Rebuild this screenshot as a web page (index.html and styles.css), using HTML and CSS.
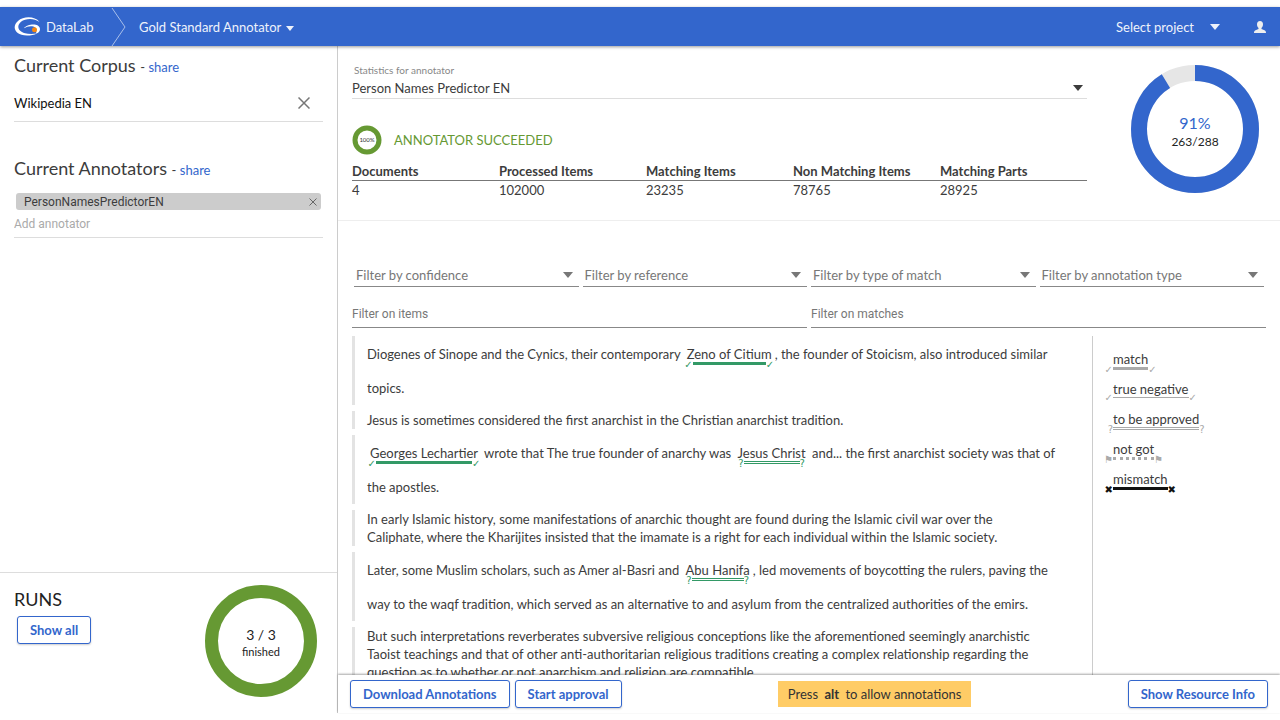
FILE: index.html
```
<!doctype html>
<html lang="en">
  <head>
    <meta charset="utf-8">
    <meta name="viewport" content="width=device-width, initial-scale=1.0">
    <title>DataLab - Gold Standard Annotator</title>
    <link rel="stylesheet" href="styles.css">
  </head>
  <body>

    <header class="topbar">
      <a class="brand" href="#">
        <svg class="logo" viewBox="0 0 27 19" width="27" height="19">
          <path d="M25.500 5C21 -1 9.500 -1 4 4C-2.500 9.500 .5 18.500 13 18.500C17 18.500 20 18 23 16.500C18 17.200 14 17 11 16.200C3.500 14.200 2.500 8.500 7 4.800C11.500 1.200 20 .8 25.500 5Z" fill="#fff"/>
          <path d="M10 11.200C13 7 25.500 5.500 26 12C26 14.500 24.500 16 22 16.500C23 13 22 9.500 18 9.300C15 9 12.500 9.800 10 11.200Z" fill="#fff"/>
          <circle cx="20.500" cy="12.800" r="2.500" fill="#f5870f"/>
        </svg>
        <span>DataLab</span>
      </a>
      <svg class="crumb" viewBox="0 0 16 38" width="16" height="38"><path d="M1 0L14 19L1 38" fill="none" stroke="#a9bfe9"/></svg>
      <button class="app-menu">Gold Standard Annotator <span class="caret small"></span></button>
      <button class="project">Select project <span class="caret"></span></button>
      <button class="user" aria-label="User">
        <svg viewBox="0 0 12 12" width="12" height="12"><path d="M6 0C8 0 9 1.300 9 3.200C9 5 8.300 6.200 7.500 7V8L10.500 9.200C11.600 9.700 12 10.500 12 12H0C0 10.500 .4 9.700 1.500 9.200L4.500 8V7C3.700 6.200 3 5 3 3.200C3 1.300 4 0 6 0Z" fill="#eee"/></svg>
      </button>
    </header>

    <div class="page">
      <aside class="sidebar">
        <section class="corpus">
          <h2>Current Corpus <small>- <a href="#">share</a></small></h2>
          <div class="corpus-item">
            <span>Wikipedia EN</span>
            <button class="close" aria-label="Remove corpus">
              <svg viewBox="0 0 12 12" width="12" height="12"><path d="M.5 .5L11.500 11.500M11.500 .5L.5 11.500" stroke="#777" stroke-width="1.500"/></svg>
            </button>
          </div>
        </section>
        <section class="annotators">
          <h2>Current Annotators <small>- <a href="#">share</a></small></h2>
          <div class="chip">
            <span>PersonNamesPredictorEN</span>
            <button class="close" aria-label="Remove annotator">
              <svg viewBox="0 0 8 8" width="8" height="8"><path d="M.5 .5L7.500 7.500M7.500 .5L.5 7.500" stroke="#666"/></svg>
            </button>
          </div>
          <input class="add" type="text" placeholder="Add annotator" aria-label="Add annotator">
        </section>
        <section class="runs">
          <div>
            <h2>RUNS</h2>
            <button class="btn">Show all</button>
          </div>
          <div class="ring ring-runs">
            <svg viewBox="0 0 112 112"><circle cx="56" cy="56" r="49.500" fill="none" stroke="#693" stroke-width="13"/></svg>
            <div class="ring-label"><span>3 / 3</span><small>finished</small></div>
          </div>
        </section>
      </aside>

      <main class="main">
        <section class="stats">
          <div class="stats-info">
            <label for="annotator">Statistics for annotator</label>
            <div class="select">
              <select id="annotator"><option>Person Names Predictor EN</option></select>
              <span class="caret"></span>
            </div>
            <div class="status">
              <div class="ring ring-status">
                <svg viewBox="0 0 30 30"><circle cx="15" cy="15" r="12" fill="none" stroke="#693" stroke-width="5"/></svg>
                <div class="ring-label">100%</div>
              </div>
              <span>ANNOTATOR SUCCEEDED</span>
            </div>
            <table>
              <thead>
                <tr><th>Documents</th><th>Processed Items</th><th>Matching Items</th><th>Non Matching Items</th><th>Matching Parts</th></tr>
              </thead>
              <tbody>
                <tr><td>4</td><td>102000</td><td>23235</td><td>78765</td><td>28925</td></tr>
              </tbody>
            </table>
          </div>
          <div class="ring ring-total">
            <svg viewBox="0 0 128 128">
              <circle cx="64" cy="64" r="56" fill="none" stroke="#e6e6e6" stroke-width="16"/>
              <circle cx="64" cy="64" r="56" fill="none" stroke="#36c" stroke-width="16" pathLength="100" stroke-dasharray="91.300 8.700" transform="rotate(-90 64 64)"/>
            </svg>
            <div class="ring-label"><b>91%</b><span>263/288</span></div>
          </div>
        </section>

        <section class="filters">
          <div class="filter-row selects">
            <div class="select"><select aria-label="Filter by confidence"><option>Filter by confidence</option></select><span class="caret"></span></div>
            <div class="select"><select aria-label="Filter by reference"><option>Filter by reference</option></select><span class="caret"></span></div>
            <div class="select"><select aria-label="Filter by type of match"><option>Filter by type of match</option></select><span class="caret"></span></div>
            <div class="select"><select aria-label="Filter by annotation type"><option>Filter by annotation type</option></select><span class="caret"></span></div>
          </div>
          <div class="filter-row">
            <input type="text" placeholder="Filter on items" aria-label="Filter on items">
            <input type="text" placeholder="Filter on matches" aria-label="Filter on matches">
          </div>
        </section>

        <div class="results">
          <div class="items">
            <p class="tall">Diogenes of Sinope and the Cynics, their contemporary <mark class="match">Zeno of Citium<i></i></mark>, the founder of Stoicism, also introduced similar<br>topics.</p>
            <p>Jesus is sometimes considered the first anarchist in the Christian anarchist tradition.</p>
            <p class="tall"><mark class="match">Georges Lechartier<i></i></mark> wrote that The true founder of anarchy was <mark class="approve">Jesus Christ<i></i></mark> and... the first anarchist society was that of<br>the apostles.</p>
            <p>In early Islamic history, some manifestations of anarchic thought are found during the Islamic civil war over the<br>Caliphate, where the Kharijites insisted that the imamate is a right for each individual within the Islamic society.</p>
            <p class="tall">Later, some Muslim scholars, such as Amer al-Basri and <mark class="approve">Abu Hanifa<i></i></mark>, led movements of boycotting the rulers, paving the<br>way to the waqf tradition, which served as an alternative to and asylum from the centralized authorities of the emirs.</p>
            <p>But such interpretations reverberates subversive religious conceptions like the aforementioned seemingly anarchistic<br>Taoist teachings and that of other anti-authoritarian religious traditions creating a complex relationship regarding the<br>question as to whether or not anarchism and religion are compatible.</p>
          </div>
          <ul class="legend">
            <li><mark class="match">match<i></i></mark></li>
            <li><mark class="negative">true negative<i></i></mark></li>
            <li><mark class="approve">to be approved<i></i></mark></li>
            <li><mark class="notgot">not got<i></i></mark></li>
            <li><mark class="mismatch">mismatch<i></i></mark></li>
          </ul>
        </div>

        <footer class="actions">
          <button class="btn">Download Annotations</button>
          <button class="btn">Start approval</button>
          <div class="hint">Press <b>alt</b> to allow annotations</div>
          <button class="btn">Show Resource Info</button>
        </footer>
      </main>
    </div>

  </body>
</html>
```

FILE: styles.css
```
*{
  box-sizing:border-box;
}
body{
  margin:0;
  padding:7px 0;
  height:100vh;
  display:flex;
  flex-direction:column;
  overflow:hidden;
  background:#fff;
  color:#3c3c3c;
  font:13px/18px Lato,"Noto Sans",sans-serif;
}
button,input,select{
  font:inherit;
  color:inherit;
  background:none;
  border:0;
  border-radius:0;
  padding:0;
  margin:0;
}
a{
  color:#36c;
  text-decoration:none;
}
h2{
  margin:0;
  font-size:18px;
  line-height:24px;
  font-weight:normal;
}
h2 small{
  font-size:13px;
}
.caret{
  display:inline-block;
  border:5px solid transparent;
  border-top:6px solid;
  border-bottom:0;
  pointer-events:none;
}
.caret.small{
  border-width:5px 4px 0;
  margin-left:2px;
  vertical-align:middle;
}

/* top bar */
.topbar{
  position:relative;
  z-index:1;
  flex:none;
  height:39px;
  display:flex;
  align-items:center;
  padding:0 14px;
  background:#36c;
  color:#eef2fb;
  box-shadow:0 1px 3px rgba(0,0,0,.4);
}
.brand{
  display:flex;
  align-items:center;
  gap:5px;
  width:97px;
  color:inherit;
}
.app-menu{
  margin-left:12px;
}
.project{
  display:flex;
  align-items:center;
  gap:16px;
  margin-left:auto;
}
.user{
  display:flex;
  margin-left:34px;
}

.page{
  flex:1;
  min-height:0;
  display:flex;
}

/* sidebar */
.sidebar{
  flex:0 0 338px;
  display:flex;
  flex-direction:column;
  border-right:1px solid #ccc;
}
.corpus{
  padding:7px 14px 0;
}
.annotators{
  padding:35px 14px 0;
}
.annotators h2{
  line-height:22px;
}
.corpus-item{
  display:flex;
  align-items:center;
  justify-content:space-between;
  height:43px;
  padding:5px 13px 0 0;
  border-bottom:1px solid #ddd;
  color:#111;
}
.close{
  display:flex;
}
.chip{
  display:flex;
  align-items:center;
  justify-content:space-between;
  height:17px;
  margin:12px 2px 4px;
  padding:0 4px 0 8px;
  border-radius:3px;
  background:#ccc;
  font-family:Roboto,sans-serif;
  font-size:12px;
}
.add{
  width:100%;
  height:23px;
  padding-bottom:4px;
  border-bottom:1px solid #ddd;
  font-family:Roboto,sans-serif;
  font-size:12px;
}
.add::placeholder{
  color:#aaa;
}
.runs{
  display:flex;
  justify-content:space-between;
  margin-top:auto;
  height:141px;
  padding:12px 20px 0 14px;
  border-top:1px solid #ddd;
  color:#222;
}
.runs h2{
  margin:2px 0 5px;
}
.runs .btn{
  margin-left:3px;
}

.btn{
  height:28px;
  padding:0 12px;
  border:1px solid #36c;
  border-radius:3px;
  color:#36c;
  background:#fff;
  font-weight:bold;
  box-shadow:0 1px 2px rgba(0,0,0,.2);
}

/* progress rings */
.ring{
  flex:none;
  display:grid;
}
.ring > *{
  grid-area:1/1;
}
.ring-label{
  display:flex;
  flex-direction:column;
  align-items:center;
  justify-content:center;
}
.ring-runs{
  width:112px;
  height:112px;
}
.ring-runs .ring-label{
  padding-top:3px;
  font-size:14px;
}
.ring-runs small{
  font-size:11px;
  line-height:16px;
}
.ring-status{
  width:30px;
  height:30px;
}
.ring-status .ring-label{
  font-size:6px;
  color:#333;
}
.ring-total{
  width:128px;
  height:128px;
}
.ring-total .ring-label{
  padding-top:6px;
  font-size:12px;
  color:#222;
}
.ring-total b{
  color:#36c;
  font-size:16px;
  font-weight:normal;
  line-height:20px;
}

/* statistics */
.main{
  flex:1;
  min-width:0;
  display:flex;
  flex-direction:column;
}
.stats{
  flex:none;
  display:flex;
  gap:44px;
  height:175px;
  padding:16px 21px 0 14px;
  border-bottom:1px solid #eee;
}
.stats .ring-total{
  margin-top:3px;
}
.stats-info{
  flex:1;
}
.stats label{
  display:block;
  padding-left:2px;
  font-size:10px;
  line-height:16px;
  color:#888;
}
.select{
  display:flex;
  align-items:center;
}
.select select{
  flex:1;
  appearance:none;
  min-width:0;
}
.stats .select{
  height:21px;
  padding-right:4px;
  border-bottom:1px solid #ddd;
}
.status{
  display:flex;
  align-items:center;
  gap:12px;
  height:30px;
  margin:26px 0 8px;
  color:#693;
}
table{
  width:100%;
  table-layout:fixed;
  border-collapse:collapse;
}
th{
  padding:0;
  border-bottom:1px solid #777;
  text-align:left;
  font-weight:bold;
  line-height:17px;
}
td{
  padding:0;
}

/* filters */
.filters{
  flex:none;
  padding:43px 14px 0;
}
.filter-row{
  display:flex;
  gap:4px;
}
.filter-row input{
  flex:1;
  height:27px;
  margin-top:14px;
  border-bottom:1px solid #888;
  font-family:Roboto,sans-serif;
  font-size:12px;
}
.filter-row input::placeholder{
  color:#777;
}
.selects{
  padding:0 2px;
}
.selects .select{
  flex:1;
  height:23px;
  padding:0 6px 0 2px;
  border-bottom:1px solid #888;
  color:#777;
}

/* annotated text */
.results{
  flex:1;
  min-height:0;
  display:flex;
  margin-top:8px;
  padding:0 14px;
  overflow:hidden;
}
.items{
  flex:1;
  min-width:0;
  white-space:nowrap;
}
.items p{
  margin:0 0 6px;
  padding-left:12px;
  border-left:3px solid #e3e3e3;
}
.items .tall{
  line-height:34px;
  padding-top:1px;
}
mark{
  position:relative;
  margin:0 3px;
  background:none;
  color:inherit;
  line-height:18px;
}
mark i{
  position:absolute;
  left:6px;
  right:6px;
  top:16px;
  height:4px;
  color:#396;
  font:10px/8px "DejaVu Sans",sans-serif;
}
mark i::before,mark i::after{
  position:absolute;
  top:-4px;
  content:"✓";
}
mark i::before{
  right:100%;
}
mark i::after{
  left:100%;
}
.match i{
  border-top:3px solid;
}
.negative i{
  border-top:1px solid;
}
.approve i{
  border-top:3px double;
}
.approve i::before,.approve i::after{
  content:"?";
}
.notgot i{
  border-top:3px dotted;
}
.notgot i::before,.notgot i::after{
  content:"⚑";
}
.mismatch i{
  border-top:3px solid;
}
.mismatch i::before,.mismatch i::after{
  content:"✖";
}
.legend{
  flex:0 0 174px;
  margin:0;
  padding:14px 0 0 17px;
  border-left:1px solid #ccc;
  list-style:none;
}
.legend li{
  height:30px;
}
.legend i{
  left:0;
  right:0;
  color:#aaa;
}
.legend .mismatch i{
  color:#111;
}

/* bottom actions */
.actions{
  position:relative;
  flex:none;
  display:flex;
  align-items:center;
  gap:5px;
  height:38px;
  padding:0 12px;
  background:#fff;
  box-shadow:0 -1px 2px rgba(0,0,0,.35);
}
.hint{
  margin:0 auto;
  padding:4px 10px;
  background:#fc6;
  color:#333;
}
.hint b{
  margin:0 3px;
}
```
